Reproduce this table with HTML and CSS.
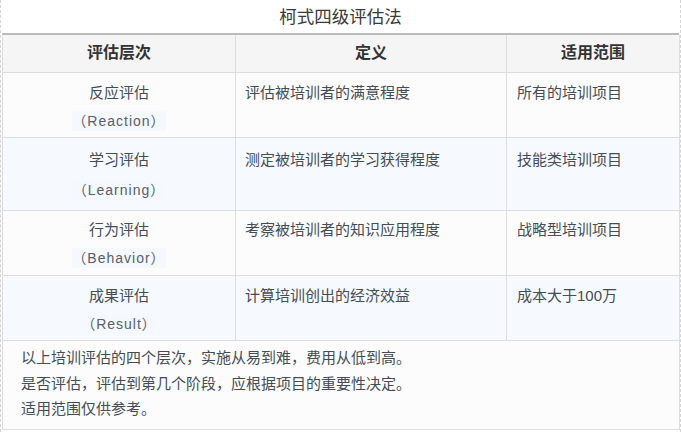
FILE: index.html
```html
<!DOCTYPE html>
<html lang="zh-CN">
<head>
<meta charset="utf-8">
<title>柯式四级评估法</title>
<link rel="stylesheet" href="styles.css">
</head>
<body>
<div class="page">
  <div class="caption">柯式四级评估法</div>
  <div class="grid">
    <div class="cell head">评估层次</div>
    <div class="cell head">定义</div>
    <div class="cell head">适用范围</div>

    <div class="cell c1 odd"><div class="ln">反应评估</div><div class="ln"><span class="en">（Reaction）</span></div></div>
    <div class="cell c2 odd">评估被培训者的满意程度</div>
    <div class="cell c3 odd">所有的培训项目</div>

    <div class="cell c1 even tall"><div class="ln">学习评估</div><div class="ln gap"><span class="en">（Learning）</span></div></div>
    <div class="cell c2 even tall">测定被培训者的学习获得程度</div>
    <div class="cell c3 even tall">技能类培训项目</div>

    <div class="cell c1 odd r3"><div class="ln">行为评估</div><div class="ln"><span class="en">（Behavior）</span></div></div>
    <div class="cell c2 odd r3">考察被培训者的知识应用程度</div>
    <div class="cell c3 odd r3">战略型培训项目</div>

    <div class="cell c1 even"><div class="ln">成果评估</div><div class="ln"><span class="en">（Result）</span></div></div>
    <div class="cell c2 even">计算培训创出的经济效益</div>
    <div class="cell c3 even">成本大于100万</div>

    <div class="cell foot">
      <p>以上培训评估的四个层次，实施从易到难，费用从低到高。</p>
      <p>是否评估，评估到第几个阶段，应根据项目的重要性决定。</p>
      <p>适用范围仅供参考。</p>
    </div>
  </div>
</div>
</body>
</html>
```

FILE: styles.css
```css
* { box-sizing: border-box; }
html, body { margin: 0; padding: 0; background: #ffffff; }
body {
  font-family: "Liberation Sans", "Noto Sans CJK SC", sans-serif;
  color: #434c57;
}
.page {
  width: 681px;
  height: 432px;
  border-left: 1px dashed #d4d4d4;
  border-right: 1px dashed #d4d4d4;
  padding-left: 1px;
  padding-right: 1px;
}
.caption {
  height: 33px;
  line-height: 35px;
  text-align: center;
  font-size: 17.5px;
  color: #3a3a3a;
}
.grid {
  display: grid;
  grid-template-columns: 233px 271px 173px;
  grid-template-rows: 38px 65px 73px 65px 65px 89px;
  border-top: 2px solid #bbbbbb;
  border-left: 1px solid #dddddd;
  width: 677px;
}
.cell {
  border-right: 1px solid #dddddd;
  border-bottom: 1px solid #dddddd;
  font-size: 15px;
  line-height: 28px;
  padding-top: 6px;
}
.head {
  background: #f5f5f5;
  font-weight: bold;
  font-size: 16px;
  color: #333;
  text-align: center;
  padding-top: 4px;
}
.odd { background: #fcfcfc; }
.even { background: #f6f9fe; }
.c1 { text-align: center; }
.c2 { padding-left: 9px; }
.c3 { padding-left: 10px; }
.tall { padding-top: 8px; }
.r3 { padding-top: 5px; }
.gap { margin-top: 2px; }
.en {
  font-size: 14px;
  letter-spacing: 1px;
  color: #58606a;
  background: #f5f8fc;
  padding: 2px 0;
}
.foot {
  grid-column: 1 / 4;
  background: #fcfcfc;
  padding: 4px 0 0 18px;
  line-height: 25.5px;
}
.foot p { margin: 0; }
```
